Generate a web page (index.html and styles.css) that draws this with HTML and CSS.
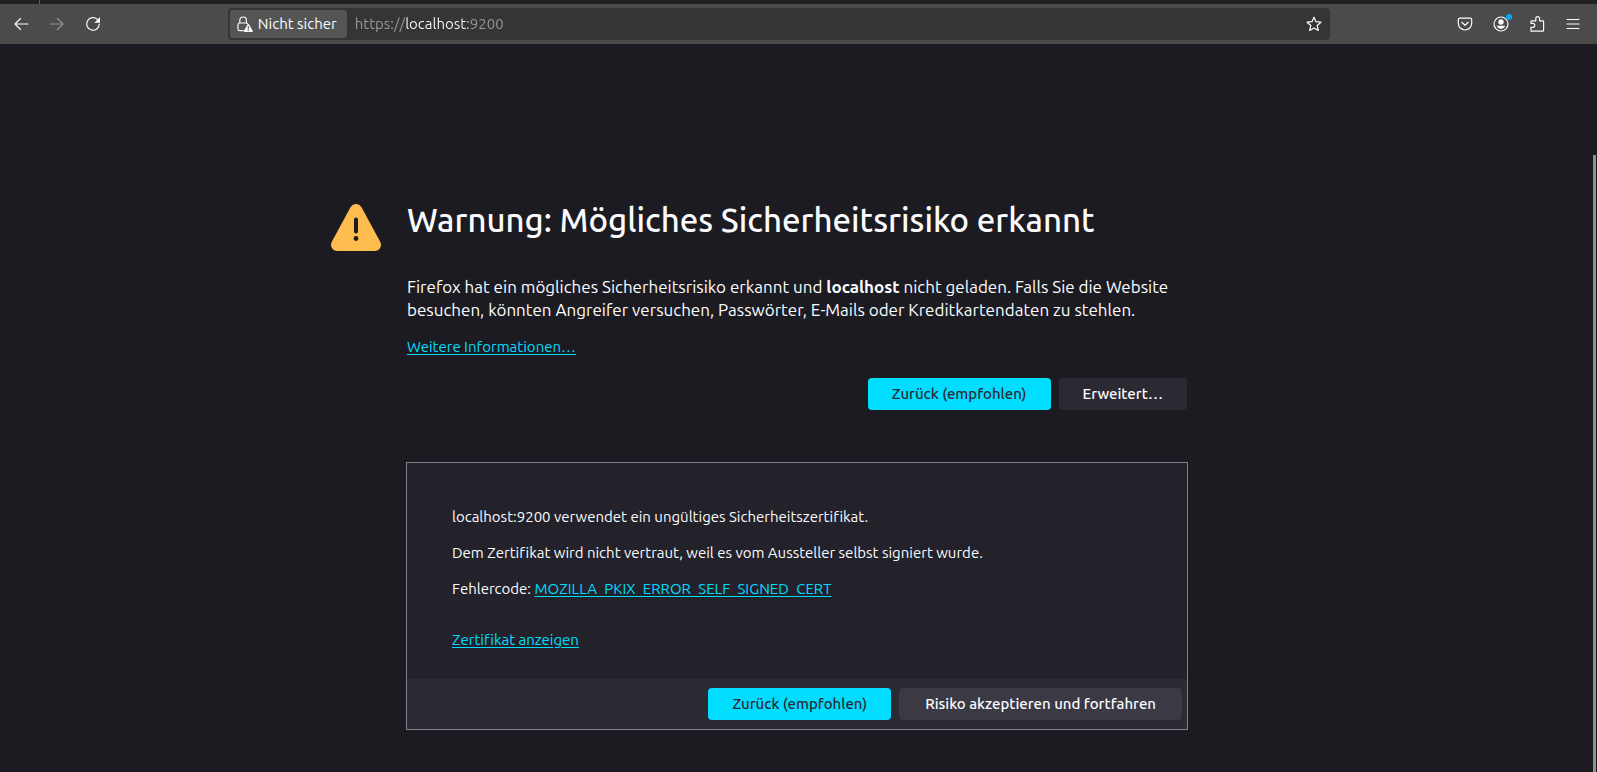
FILE: index.html
```html
<!DOCTYPE html>
<html lang="de">
<head>
<meta charset="utf-8">
<meta name="viewport" content="width=device-width, initial-scale=1">
<title>Warnung: Mögliches Sicherheitsrisiko erkannt</title>
<link rel="stylesheet" href="styles.css">
</head>
<body>
<div class="tabstrip"><span class="tab-edge"></span></div>
<header class="toolbar">
  <nav class="tools" aria-label="Navigation">
    <button class="tool" aria-label="Zurück"><svg viewBox="0 0 16 16"><path d="M15 8H2M7.500 2.500 2 8l5.500 5.500"/></svg></button>
    <button class="tool tool-disabled" aria-label="Vor" disabled><svg viewBox="0 0 16 16"><path d="M1 8h13M8.500 2.500 14 8l-5.500 5.500"/></svg></button>
    <button class="tool" aria-label="Neu laden"><svg viewBox="0 0 16 16"><path d="M12.200 3.200A6.300 6.300 0 1 0 14.300 8"/><path class="fill" d="M15 1v5.200a.5.500 0 0 1-.5.500H9.300z"/></svg></button>
  </nav>
  <div class="spacer"></div>
  <div class="urlbar">
    <button class="identity">
      <svg viewBox="0 0 16 16"><path d="M6 14.700H2.800A1.800 1.800 0 0 1 1 12.900V8.800A1.800 1.800 0 0 1 2.800 7h6.400c.5 0 .9.200 1.200.5M2.800 7V4.300a3.300 3.300 0 0 1 6.600 0V7"/><path class="fill" fill-rule="evenodd" d="M10.600 8.300a.8.800 0 0 1 1.400 0l3.700 6.400a.8.800 0 0 1-.7 1.300H7.600a.8.800 0 0 1-.7-1.300zM10.700 10.200v3h1.200v-3zM10.700 13.900V15h1.200v-1.100z"/></svg>
      Nicht sicher
    </button>
    <input class="address" type="text" value="https://localhost:9200" aria-label="Adresse" spellcheck="false">
    <button class="tool star" aria-label="Lesezeichen hinzufügen"><svg viewBox="0 0 16 16"><path d="m8 1.200 2 4.500 4.900.5-3.700 3.300 1.100 4.900L8 11.900l-4.300 2.500 1.100-4.900L1.100 6.200 6 5.700z"/></svg></button>
  </div>
  <div class="spacer"></div>
  <nav class="tools" aria-label="Werkzeuge">
    <button class="tool" aria-label="Pocket"><svg viewBox="0 0 16 16"><path d="M2.800 2.200h10.400c.9 0 1.500.6 1.500 1.500v3.600a6.700 6.700 0 0 1-13.400 0V3.700c0-.9.600-1.500 1.500-1.500z"/><path d="M4.800 6.300 8 9.300l3.200-3"/></svg></button>
    <button class="tool" aria-label="Konto"><svg viewBox="0 0 16 16"><circle cx="8" cy="8" r="7"/><circle class="fill" cx="8" cy="6" r="2.700"/><path class="fill" d="M3.700 9.800h8.600A4.800 4.800 0 0 1 8 12.900a4.800 4.800 0 0 1-4.300-3.100z"/></svg><span class="badge"></span></button>
    <button class="tool" aria-label="Erweiterungen"><svg viewBox="0 0 16 16"><path d="M2 15.200v-3.900h1.800a2 2 0 0 0 0-4H2V5.600c0-.5.300-.8.800-.8h4V2.600a1.900 1.900 0 0 1 3.800 0v2.200h3.200c.5 0 .8.300.8.800v8.800c0 .5-.3.800-.8.800z"/></svg></button>
    <button class="tool" aria-label="Menü"><svg viewBox="0 0 16 16"><path d="M2 3.500h12M2 8h12M2 12.500h12"/></svg></button>
  </nav>
</header>
<main class="page">
  <svg class="warning" viewBox="0 0 50 47" aria-hidden="true"><path fill="#ffbd4f" d="M19.500 3.200a6.300 6.300 0 0 1 11 0l18.700 34.600A6.200 6.200 0 0 1 43.700 47H6.300A6.200 6.200 0 0 1 .8 37.800z"/><path d="M25 15.500v12" stroke="#1c1b22" stroke-width="4" stroke-linecap="round"/><circle cx="25" cy="34.500" r="2.400" fill="#1c1b22"/></svg>
  <div class="content">
    <h1>Warnung: Mögliches Sicherheitsrisiko erkannt</h1>
    <p class="lead">Firefox hat ein mögliches Sicherheitsrisiko erkannt und <b>localhost</b> nicht geladen. Falls Sie die Website besuchen, könnten Angreifer versuchen, Passwörter, E-Mails oder Kreditkartendaten zu stehlen.</p>
    <p class="more"><a href="#info">Weitere Informationen…</a></p>
    <div class="actions">
      <button class="btn primary">Zurück (empfohlen)</button>
      <button class="btn">Erweitert…</button>
    </div>
    <section class="panel">
      <div class="details">
        <p>localhost:9200 verwendet ein ungültiges Sicherheitszertifikat.</p>
        <p>Dem Zertifikat wird nicht vertraut, weil es vom Aussteller selbst signiert wurde.</p>
        <p>Fehlercode: <a href="#code">MOZILLA_PKIX_ERROR_SELF_SIGNED_CERT</a></p>
        <p class="cert"><a href="#cert">Zertifikat anzeigen</a></p>
      </div>
      <div class="actions panel-actions">
        <button class="btn primary">Zurück (empfohlen)</button>
        <button class="btn raised">Risiko akzeptieren und fortfahren</button>
      </div>
    </section>
  </div>
</main>
<div class="scroll-thumb"></div>
</body>
</html>
```
FILE: styles.css
```css
* { box-sizing: border-box; }
body {
  margin: 0;
  min-height: 100vh;
  background: #1c1b22;
  color: #fbfbfe;
  font: 15px/20px Ubuntu, "Noto Sans", sans-serif;
  font-variant-ligatures: none;
}
button, input { font: inherit; color: inherit; border: 0; margin: 0; }
h1, p { margin: 0; }
.tabstrip { height: 4px; background: #202020; display: flex; padding-left: 39px; }
.tab-edge { width: 1px; background: #5c5c5c; }
.toolbar {
  display: flex;
  align-items: center;
  height: 40px;
  padding: 0 6px 0 3px;
  background: #4b4b4b;
}
.tools { display: flex; gap: 0; }
.tool {
  position: relative;
  display: flex;
  align-items: center;
  justify-content: center;
  width: 36px;
  height: 32px;
  padding: 0;
  background: none;
}
.tool svg, .identity svg {
  width: 16px;
  height: 16px;
  fill: none;
  stroke: #fbfbfe;
  stroke-width: 1.2;
  stroke-linecap: round;
  stroke-linejoin: round;
}
.tool svg .fill, .identity svg .fill { fill: #fbfbfe; stroke: none; }
.tool-disabled { opacity: .4; }
.badge {
  position: absolute;
  top: 6px;
  right: 7px;
  width: 6px;
  height: 6px;
  border-radius: 50%;
  background: #00a8f5;
}
.spacer { flex: 12 0 0; }
.urlbar {
  flex: 113 1 0;
  display: flex;
  align-items: center;
  height: 32px;
  padding-left: 2px;
  border-radius: 4px;
  background: #353535;
}
.identity {
  display: flex;
  align-items: center;
  gap: 5px;
  height: 28px;
  padding: 0 10px 0 7px;
  border-radius: 3px;
  background: #555;
  white-space: nowrap;
}
.address {
  flex: 1;
  min-width: 0;
  height: 28px;
  padding: 0 8px 2px;
  color: transparent;
  caret-color: #fbfbfe;
  outline: 0;
  background: linear-gradient(90deg, #9a9a9a 59px, #fbfbfe 59px 121px, #9a9a9a 121px) text;
}
.star { width: 32px; }
.page {
  display: grid;
  grid-template-columns: minmax(60px, 1fr) minmax(0, 782px) minmax(60px, 1fr);
  column-gap: 25px;
  padding: 152px 3px 40px 0;
}
.warning { width: 50px; height: 47px; justify-self: end; margin-top: 8px; }
.content { min-width: 0; }
h1 { padding: 0 1px; font-size: 33px; line-height: 48px; font-weight: 500; }
.lead { padding: 0 1px; margin-top: 31px; font-size: 17px; line-height: 23px; }
.more { padding: 0 1px; margin-top: 16px; }
a { color: #00ddff; text-underline-offset: 2px; }
.actions { display: flex; justify-content: flex-end; gap: 8px; margin-top: 21px; padding-right: 1px; }
.btn {
  min-height: 32px;
  padding: 0 24px;
  border-radius: 4px;
  background: #2b2a33;
  font-weight: 500;
}
.primary { background: #00ddff; color: #2b2a33; }
.raised { padding: 0 26px; background: #3a3944; }
.panel { margin-top: 52px; border: 1px solid #80808a; background: #23222b; }
.details { padding: 44px 45px 29px; display: grid; gap: 16px; }
.cert { margin-top: 15px; }
.panel-actions { margin: 0; padding: 9px 5px; background: #2b2a33; }
.scroll-thumb {
  position: fixed;
  top: 155px;
  right: 1px;
  bottom: 0;
  width: 3px;
  background: #8f8f91;
}
```
